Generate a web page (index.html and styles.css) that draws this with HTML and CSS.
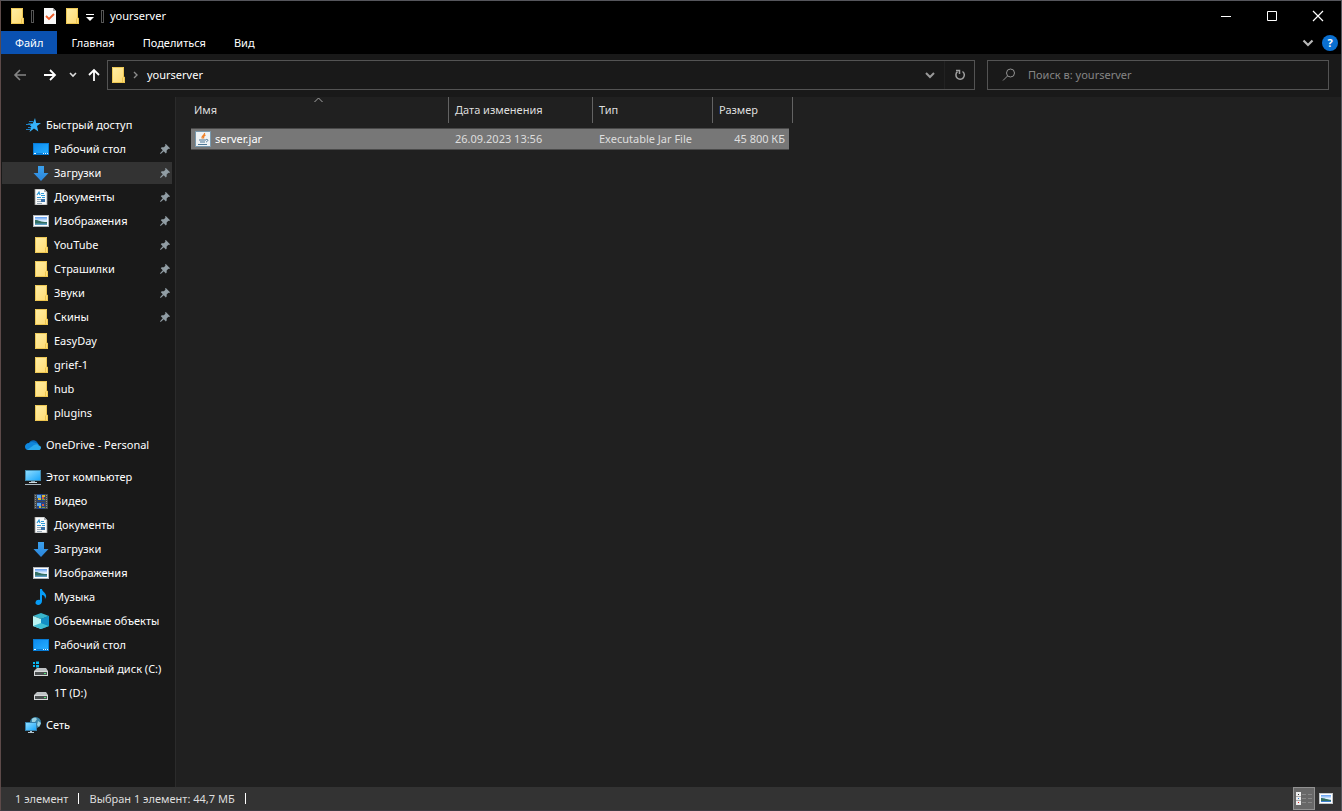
FILE: index.html
```html
<!DOCTYPE html>
<html lang="ru">
<head>
<meta charset="utf-8">
<title>yourserver</title>
<link rel="stylesheet" href="styles.css">
</head>
<body>
<svg class="defs" aria-hidden="true">
  <defs>
    <linearGradient id="g-folder" x1="0" y1="0" x2="1" y2="1"><stop offset="0" stop-color="#ffefa6"/><stop offset="1" stop-color="#ffd970"/></linearGradient>
    <linearGradient id="g-blue" x1="0" y1="0" x2="1" y2="1"><stop offset="0" stop-color="#0d8bef"/><stop offset="1" stop-color="#25adff"/></linearGradient>
    <linearGradient id="g-arrow" x1="0" y1="0" x2="0" y2="1"><stop offset="0" stop-color="#3ba0ec"/><stop offset="1" stop-color="#2b86dc"/></linearGradient>
    <linearGradient id="g-sky" x1="0" y1="0" x2="0" y2="1"><stop offset="0" stop-color="#5e9df2"/><stop offset=".5" stop-color="#e6f3ff"/><stop offset="1" stop-color="#9cc7e8"/></linearGradient>
    <linearGradient id="g-screen" x1="0" y1="0" x2="1" y2="1"><stop offset="0" stop-color="#8ddcff"/><stop offset="1" stop-color="#1ca7fb"/></linearGradient>
  </defs>
  <symbol id="i-folder" viewBox="0 0 16 16"><path d="M2 0h12v10h1v6H2z" fill="url(#g-folder)"/><path d="M2.500 .5h11v9.500h1v5.500h-12z" fill="none" stroke="#e8bf45" stroke-width=".8"/><path d="M12.500 10.500v5" stroke="#e8bf45" stroke-width=".8"/></symbol>
  <symbol id="i-star" viewBox="0 0 16 16"><path d="M10 1l1.200 5H16l-4 3 1.300 5.500L9 11.500 4.500 15l1.800-5.500L3 6.500h4.800z" fill="#36b3fa"/><path d="M4 4.500h4M1 7.500h5M3 10.500h3M1 12.500h4" stroke="#1c7fc4"/></symbol>
  <symbol id="i-desktop" viewBox="0 0 16 16"><path d="M0 2h16v12H0z" fill="#087cd5"/><path d="M1 3h14v9H1z" fill="url(#g-blue)"/><path d="M1 12.500h2M10 12.500h1M12 12.500h1M14 12.500h1" stroke="#e7f6ff"/></symbol>
  <symbol id="i-down" viewBox="0 0 16 16"><path d="M5 1h6v7h4.500L8 16 .5 8H5z" fill="url(#g-arrow)"/></symbol>
  <symbol id="i-doc" viewBox="0 0 16 16"><path d="M2 0h9l3 3v13H2z" fill="#f8fafb" stroke="#9b9b9b" stroke-width=".8"/><path d="M11 0v3h3z" fill="#a7adb0"/><path d="M4 6l2-3 1 3M4 8.500h4M8 4.500h3M8 6.500h4M9 8.500h3" fill="none" stroke="#2f99d7" stroke-width="1.200"/><path d="M4 10.500h4M4 12.500h8M4 14.500h5" stroke="#99a8b5"/><path d="M8 10h4v3H8z" fill="#3972aa"/></symbol>
  <symbol id="i-image" viewBox="0 0 16 16"><path d="M0 2h16v12H0z" fill="#afb5ba"/><path d="M1 3h14v10H1z" fill="#fff"/><path d="M2 4h12v8H2z" fill="url(#g-sky)"/><path d="M2 7c3-.5 5 2 12 2v2H2z" fill="#347063"/><path d="M2 10.500h12V12H2z" fill="#5b9cc3"/></symbol>
  <symbol id="i-pin" viewBox="0 0 12 12"><path d="M7 0l5 5-1 1-1-.3-2 2.200v2.300L7 11.300 4.500 8.700.8 12 0 11.200 3.300 7.500 1 5l1-1h2.500L6.600 2 6 1z" fill="#919da4"/></symbol>
  <symbol id="i-cloud" viewBox="0 0 16 16"><path d="M4 6.500C5 2 12 2 13 7l-2 4-7-2z" fill="#0969ba"/><path d="M4 6c-5 .2-5.300 6.500-1 7l9-5.500C9.500 4.500 6 4.500 4 6z" fill="#0f86dc"/><path d="M9 6.800c2-1.200 4-.5 5 1.200l-2 2z" fill="#168cdf"/><path d="M2 13l7-5c2-1.200 4-.4 5 .5 3 .5 2.500 4.500-.5 4.500z" fill="#2aa9ed"/></symbol>
  <symbol id="i-pc" viewBox="0 0 16 16"><path d="M0 1h16v11H0z" fill="#448caf"/><path d="M1 2h14v9H1z" fill="url(#g-screen)"/><path d="M6 12h4v1H6z" fill="#8d9ea7"/><path d="M4 13.500h8" stroke="#cbd9df"/><path d="M0 15.500h16" stroke="#a9b8c1"/></symbol>
  <symbol id="i-video" viewBox="0 0 16 16"><path d="M1 1h14v15H1z" fill="#45494b"/><path d="M2.500 2v14M13.500 2v14" stroke="#8f8f8f" stroke-dasharray="1 1"/><path d="M4 1h8v7H4zM4 9h8v7H4z" fill="#24468c"/><path d="M4 2h4v3H4zM4 10h4v3H4z" fill="#57a7ef"/><path d="M9 2h3v2H9zM5 5h3v2H5zM6 13h2v2H6z" fill="#d6b631"/><path d="M9 4h2v2H9zM9 11h2v2H9z" fill="#db593d"/><path d="M9 6h3v1H9zM9 14h3v1H9z" fill="#7d9f40"/></symbol>
  <symbol id="i-music" viewBox="0 0 16 16"><path d="M7 0h2c0 3 5 4 4 8l-1 2c0-3-1-4-3-4v6c0 5-7 5-6.500 1.500C3 11 5 10.500 7 11z" fill="#079cf5"/></symbol>
  <symbol id="i-cube" viewBox="0 0 16 16"><path d="M0 3l8-3 8 3-8 3z" fill="#39b5cb"/><path d="M0 3l8 3v10l-8-3z" fill="#baf4f3"/><path d="M16 3L8 6v10l8-3z" fill="#17a7cc"/><path d="M8 10l8 3-8 3-8-3z" fill="#40bfd5"/><path d="M8 6l8-3v10l-8-3z" fill="#138ec5"/></symbol>
  <symbol id="i-disk" viewBox="0 0 16 16"><path d="M4 7h9l2 3H1z" fill="#bfc3c5"/><path d="M1 10h14v5H1z" fill="#d7d9da"/><path d="M2 11h12v3H2z" fill="#4b4f50"/><path d="M11 12h2v1h-2z" fill="#54e878"/></symbol>
  <symbol id="i-windows" viewBox="0 0 16 16"><path d="M0 1h2v2H0zM3 .5h3V3H3zM0 4h2v2H0zM3 4h3v2.500H3z" fill="#09b9f4"/></symbol>
  <symbol id="i-net" viewBox="0 0 16 16"><circle cx="10.500" cy="5.500" r="5.500" fill="#3c86a9"/><path d="M7 2c2-2 4-1 5 0l-2 3-3 1zM13 4l3 2-2 4-2-2z" fill="#9ad0df"/><path d="M0 5h12v9H0z" fill="#357faa"/><path d="M1 6h10v7H1z" fill="url(#g-screen)"/><path d="M5 14h2v1H5zM3 15h6v1H3z" fill="#b0c5cf"/></symbol>
  <symbol id="i-check" viewBox="0 0 16 16"><path d="M2 0h9l3 3v13H2z" fill="#f8f8f8"/><path d="M11 0v3h3z" fill="#a9a9a9"/><path d="M4 8l3 3 5-5" fill="none" stroke="#ef5b28" stroke-width="1.800"/></symbol>
  <symbol id="i-java" viewBox="0 0 16 16"><path d="M.5.5h15v15H.5z" fill="#eef2f4" stroke="#7798ad"/><path d="M9.500 2c1 2-4 3.500-2 5.500M10.500 4c-3 1.500-1.500 2-2 3.500" fill="none" stroke="#ee8129" stroke-width="1.300"/><path d="M4 9h7M5 11h5M3 13.500h9M11 8.500c3-.5 2 2 0 2.500" fill="none" stroke="#4c7795"/></symbol>
</svg>

<div class="window">
  <header class="titlebar">
    <svg class="icon"><use href="#i-folder"/></svg>
    <span class="grip"></span>
    <button class="quick" aria-label="Свойства"><svg class="icon"><use href="#i-check"/></svg></button>
    <button class="quick folder" aria-label="Новая папка"><svg class="icon"><use href="#i-folder"/></svg></button>
    <button class="quick menu" aria-label="Настройка панели"><svg width="8" height="7" viewBox="0 0 8 7"><path d="M0 .5h8" stroke="#fff"/><path d="M0 3h8L4 7z" fill="#fff"/></svg></button>
    <span class="grip"></span>
    <h1 class="title">yourserver</h1>
    <div class="controls">
      <button aria-label="Свернуть"><svg width="12" height="12"><path d="M1 6.500h10" stroke="#fff"/></svg></button>
      <button aria-label="Развернуть"><svg width="12" height="12"><path d="M1.500 1.500h9v9h-9z" fill="none" stroke="#fff"/></svg></button>
      <button aria-label="Закрыть"><svg width="12" height="12"><path d="M1 1l10 10M11 1L1 11" stroke="#fff" stroke-width="1.200"/></svg></button>
    </div>
  </header>

  <nav class="tabs">
    <button class="tab file">Файл</button>
    <button class="tab">Главная</button>
    <button class="tab">Поделиться</button>
    <button class="tab">Вид</button>
    <div class="ribbon-tools">
      <button aria-label="Развернуть ленту"><svg width="12" height="8" viewBox="0 0 12 8"><path d="M1.500 1.500L6 6l4.500-4.500" fill="none" stroke="#b8b8b8" stroke-width="2.200"/></svg></button>
      <button class="help" aria-label="Справка">?</button>
    </div>
  </nav>

  <div class="navbar">
    <div class="arrows">
      <button aria-label="Назад"><svg width="14" height="12" viewBox="0 0 14 12"><path d="M13 6H2M7 1L2 6l5 5" fill="none" stroke="#858585" stroke-width="1.600"/></svg></button>
      <button aria-label="Вперед"><svg width="14" height="12" viewBox="0 0 14 12"><path d="M1 6h11M7 1l5 5-5 5" fill="none" stroke="#fff" stroke-width="1.800"/></svg></button>
      <button class="recent" aria-label="Последние расположения"><svg width="8" height="6" viewBox="0 0 8 6"><path d="M1 1l3 3 3-3" fill="none" stroke="#ddd" stroke-width="1.600"/></svg></button>
      <button class="up" aria-label="Вверх"><svg width="12" height="14" viewBox="0 0 12 14"><path d="M6 13V2M1 7l5-5 5 5" fill="none" stroke="#fff" stroke-width="1.800"/></svg></button>
    </div>
    <div class="address">
      <svg class="icon"><use href="#i-folder"/></svg>
      <svg class="crumb" width="6" height="8" viewBox="0 0 6 8"><path d="M1 1l3 3-3 3" fill="none" stroke="#8b8b8b" stroke-width="1.400"/></svg>
      <span class="path">yourserver</span>
      <button class="drop" aria-label="Предыдущие расположения"><svg width="10" height="8" viewBox="0 0 10 8"><path d="M1 2l4 4 4-4" fill="none" stroke="#999" stroke-width="2"/></svg></button>
      <button class="refresh" aria-label="Обновить"><svg width="12" height="12" viewBox="0 0 12 12"><path d="M8.500 2.500a4.200 4.200 0 1 1-5 .2" fill="none" stroke="#a0a0a0" stroke-width="1.500"/><path d="M2 1.500h3.500V5" fill="none" stroke="#a0a0a0" stroke-width="1.500"/></svg></button>
    </div>
    <label class="search">
      <svg width="14" height="14" viewBox="0 0 14 14"><circle cx="8.500" cy="5" r="4" fill="none" stroke="#929292"/><path d="M5.500 8L1 12.500" stroke="#929292"/></svg>
      <input type="text" aria-label="Поиск" placeholder="Поиск в: yourserver">
    </label>
  </div>

  <main class="body">
    <aside class="sidebar">
      <ul class="group">
        <li><a class="root" href="#"><svg class="icon"><use href="#i-star"/></svg>Быстрый доступ</a></li>
        <li><a href="#"><svg class="icon"><use href="#i-desktop"/></svg>Рабочий стол<svg class="pin"><use href="#i-pin"/></svg></a></li>
        <li><a class="active" href="#"><svg class="icon"><use href="#i-down"/></svg>Загрузки<svg class="pin"><use href="#i-pin"/></svg></a></li>
        <li><a href="#"><svg class="icon"><use href="#i-doc"/></svg>Документы<svg class="pin"><use href="#i-pin"/></svg></a></li>
        <li><a href="#"><svg class="icon"><use href="#i-image"/></svg>Изображения<svg class="pin"><use href="#i-pin"/></svg></a></li>
        <li><a href="#"><svg class="icon"><use href="#i-folder"/></svg>YouTube<svg class="pin"><use href="#i-pin"/></svg></a></li>
        <li><a href="#"><svg class="icon"><use href="#i-folder"/></svg>Страшилки<svg class="pin"><use href="#i-pin"/></svg></a></li>
        <li><a href="#"><svg class="icon"><use href="#i-folder"/></svg>Звуки<svg class="pin"><use href="#i-pin"/></svg></a></li>
        <li><a href="#"><svg class="icon"><use href="#i-folder"/></svg>Скины<svg class="pin"><use href="#i-pin"/></svg></a></li>
        <li><a href="#"><svg class="icon"><use href="#i-folder"/></svg>EasyDay</a></li>
        <li><a href="#"><svg class="icon"><use href="#i-folder"/></svg>grief-1</a></li>
        <li><a href="#"><svg class="icon"><use href="#i-folder"/></svg>hub</a></li>
        <li><a href="#"><svg class="icon"><use href="#i-folder"/></svg>plugins</a></li>
      </ul>
      <ul class="group">
        <li><a class="root" href="#"><svg class="icon"><use href="#i-cloud"/></svg>OneDrive - Personal</a></li>
      </ul>
      <ul class="group">
        <li><a class="root" href="#"><svg class="icon"><use href="#i-pc"/></svg>Этот компьютер</a></li>
        <li><a href="#"><svg class="icon"><use href="#i-video"/></svg>Видео</a></li>
        <li><a href="#"><svg class="icon"><use href="#i-doc"/></svg>Документы</a></li>
        <li><a href="#"><svg class="icon"><use href="#i-down"/></svg>Загрузки</a></li>
        <li><a href="#"><svg class="icon"><use href="#i-image"/></svg>Изображения</a></li>
        <li><a href="#"><svg class="icon"><use href="#i-music"/></svg>Музыка</a></li>
        <li><a href="#"><svg class="icon"><use href="#i-cube"/></svg>Объемные объекты</a></li>
        <li><a href="#"><svg class="icon"><use href="#i-desktop"/></svg>Рабочий стол</a></li>
        <li><a href="#"><svg class="icon"><use href="#i-disk"/><use href="#i-windows"/></svg>Локальный диск (C:)</a></li>
        <li><a href="#"><svg class="icon"><use href="#i-disk"/></svg>1T (D:)</a></li>
      </ul>
      <ul class="group">
        <li><a class="root" href="#"><svg class="icon"><use href="#i-net"/></svg>Сеть</a></li>
      </ul>
    </aside>

    <section class="files">
      <table>
        <colgroup><col class="c-name"><col class="c-date"><col class="c-type"><col class="c-size"></colgroup>
        <thead>
          <tr>
            <th class="name">Имя<svg class="sort" width="9" height="6" viewBox="0 0 9 6"><path d="M.5 5l4-4 4 4" fill="none" stroke="#a5a5a5"/></svg></th>
            <th>Дата изменения</th>
            <th>Тип</th>
            <th>Размер</th>
          </tr>
        </thead>
        <tbody>
          <tr>
            <td class="name"><span class="file-name"><svg class="icon"><use href="#i-java"/></svg>server.jar</span></td>
            <td>26.09.2023 13:56</td>
            <td>Executable Jar File</td>
            <td class="size">45 800 КБ</td>
          </tr>
        </tbody>
      </table>
    </section>
  </main>

  <footer class="status">
    <span>1 элемент</span><span class="bar"></span><span>Выбран 1 элемент: 44,7 МБ</span><span class="bar"></span>
    <div class="views">
      <button class="on" aria-label="Таблица"><svg width="16" height="14" viewBox="0 0 16 14"><path d="M0 0h5v13H0z" fill="#eee"/><path d="M2 2h1v1H2z" fill="#333"/><path d="M2 6h1v1H2z" fill="#2878cc"/><path d="M2 10h1v1H2z" fill="#d22"/><path d="M0 4.500h5M0 8.500h5" stroke="#aaa"/><path d="M6 2.500h4M12 2.500h4M6 6.500h4M12 6.500h4M6 10.500h4M12 10.500h4" stroke="#888"/></svg></button>
      <button aria-label="Крупные значки"><svg class="thumb" viewBox="0 0 14 12"><path d="M0 0h14v11H0z" fill="#c4c8cb"/><path d="M1 1h12v9H1z" fill="#fff"/><path d="M2 2h10v7H2z" fill="url(#g-sky)"/><path d="M2 5c3 0 5 1 10 2v1H2z" fill="#347063"/><path d="M2 8h10v1H2z" fill="#3b7fd0"/></svg></button>
    </div>
  </footer>
</div>
</body>
</html>
```

FILE: styles.css
```css
* { box-sizing: border-box; }

body {
  margin: 0;
  background: #191919;
  color: #fff;
  font: 11px/16px "Noto Sans", "Open Sans", sans-serif;
}

button {
  display: flex;
  align-items: center;
  justify-content: center;
  padding: 0;
  border: 0;
  background: none;
  color: inherit;
  font: inherit;
}

svg { display: block; flex: none; }
.defs { position: absolute; width: 0; height: 0; }
.icon { width: 16px; height: 16px; }
.thumb { width: 14px; height: 12px; }

.window {
  display: flex;
  flex-direction: column;
  min-height: 100vh;
  border: 1px solid #55565c;
  border-left-color: #5d4a49;
  border-bottom-color: #3c3a42;
}

.titlebar {
  display: flex;
  align-items: center;
  height: 30px;
  padding-left: 8px;
  background: #000;
}
.grip {
  width: 3px;
  height: 13px;
  margin: 0 8px 0 6px;
  border: 1px solid #555;
}
.quick.folder { margin-left: 6px; }
.quick.menu { margin: 3px 1px 0 6px; }
.menu + .grip { margin-right: 6px; }
.title { margin: 0; font-size: 11px; font-weight: 400; }
.controls { display: flex; align-self: stretch; margin-left: auto; }
.controls button { width: 46px; }

.tabs { display: flex; height: 23px; background: #000; }
.tab { padding: 0 14px; }
.tab.file { background: #0a51b1; }
.ribbon-tools { display: flex; align-items: center; gap: 8px; margin-left: auto; padding-right: 3px; }
.help {
  width: 16px;
  height: 16px;
  border-radius: 50%;
  background: #0a6fd0;
  font-weight: 700;
}

.navbar {
  display: grid;
  grid-template-columns: 106px 868fr 354fr;
  padding: 6px 12px 7px 0;
}
.arrows { display: flex; padding-left: 12px; align-items: center; gap: 16px; }
.arrows .recent { margin-left: -4px; }
.arrows .up { margin-left: -5px; }
.address {
  display: flex;
  height: 30px;
  align-items: center;
  border: 1px solid #535353;
  padding-left: 2px;
}
.crumb { margin: 0 8px 0 7px; }
.drop { align-self: stretch; width: 30px; margin-left: auto; border-right: 1px solid #222; }
.refresh { align-self: stretch; width: 29px; }
.search {
  display: flex;
  align-items: center;
  gap: 12px;
  margin-left: 12px;
  padding-left: 14px;
  border: 1px solid #535353;
}
.search input {
  flex: 1;
  min-width: 0;
  padding: 0;
  border: 0;
  outline: 0;
  background: none;
  color: #fff;
  font: inherit;
}
.search input::placeholder { color: #858585; opacity: 1; }

.body { display: flex; flex: 1; }
.sidebar { width: 175px; padding: 16px 3px 0 1px; border-right: 1px solid #2b2b2b; }
.group { margin: 0 0 8px; padding: 0; list-style: none; }
.group li { padding: 1px 0; }
.sidebar a {
  display: flex;
  align-items: center;
  gap: 5px;
  height: 22px;
  padding-left: 31px;
  color: #fff;
  text-decoration: none;
  white-space: nowrap;
}
.sidebar a.root { padding-left: 23px; }
.sidebar a.active { background: #333; }
.pin { width: 10px; height: 10px; margin: 0 2px 0 auto; }

.files { flex: 1; background: #202020; padding-left: 15px; }
table { width: 602px; table-layout: fixed; border-spacing: 0; }
.c-name { width: 258px; }
.c-date { width: 144px; }
.c-type { width: 120px; }
.c-size { width: 80px; }
th {
  height: 26px;
  padding: 0 6px;
  border-right: 1px solid #636363;
  color: #dedede;
  font-weight: 400;
  text-align: left;
}
th.name { position: relative; padding-left: 3px; }
.sort { position: absolute; top: 0; left: 48%; }
tbody::before { content: ""; display: block; height: 5px; }
td {
  height: 22px;
  padding: 0 6px;
  background: #777;
  background-clip: padding-box;
  box-shadow: inset 0 1px #4a4a4a, inset 0 -1px #4a4a4a;
  color: #dedede;
}
td.name { padding-left: 4px; color: #fff; }
td.size { padding-right: 4px; border-right: 4px solid transparent; text-align: right; }
.file-name { display: flex; align-items: center; gap: 4px; }

.status {
  display: flex;
  align-items: center;
  height: 23px;
  padding: 0 8px 0 14px;
  background: #333;
  color: #dedede;
}
.bar { width: 1px; height: 11px; margin: 0 10px; background: #fff; }
.views { display: flex; align-self: stretch; margin-left: auto; gap: 4px; }
.views button { width: 22px; }
.views button + button { width: 14px; }
.views .on { border: 1px solid #919191; background: #686868; }
```
